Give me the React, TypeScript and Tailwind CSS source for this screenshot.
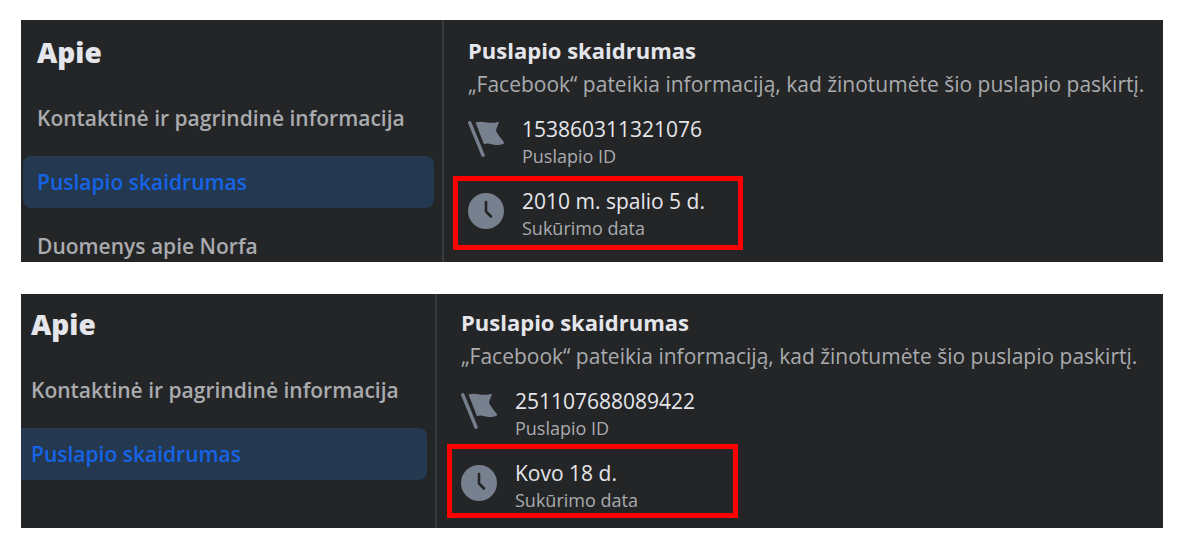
type PanelData = {
  nav: string[];
  id: string;
  created: string;
  inset: boolean;
};

const panels: PanelData[] = [
  {
    nav: ["Kontaktinė ir pagrindinė informacija", "Puslapio skaidrumas", "Duomenys apie Norfa"],
    id: "153860311321076",
    created: "2010 m. spalio 5 d.",
    inset: true,
  },
  {
    nav: ["Kontaktinė ir pagrindinė informacija", "Puslapio skaidrumas"],
    id: "251107688089422",
    created: "Kovo 18 d.",
    inset: false,
  },
];

const ACTIVE = "Puslapio skaidrumas";

function FlagIcon() {
  return (
    <svg viewBox="0 0 36 36" className="mt-[5px] size-9 shrink-0" aria-hidden="true">
      <path d="M1.8 1.800 15 34.200" stroke="#77808f" strokeWidth="3.400" strokeLinecap="round" />
      <path
        d="M7.500 1.600C11 0 15 .8 19 1.400c4 .7 7.500.6 10.500-.5.9-.3 1.500.4 1.100 1.200L28.200 8.500c-.3.9-.2 1.600.3 2.300 2 3.200 4 6.500 7.100 9.900.8.9.4 1.800-.6 2.200-5.400 2-9.500.8-13.800-.2-2.500-.5-4-.1-5.200.6z"
        fill="#77808f"
      />
    </svg>
  );
}

function ClockIcon() {
  return (
    <svg viewBox="0 0 36 36" className="mt-[5px] size-9 shrink-0" aria-hidden="true">
      <circle cx="18" cy="18" r="18" fill="#77808f" />
      <path
        d="M18 9v9.500l5 5"
        fill="none"
        stroke="#242526"
        strokeWidth="2.600"
        strokeLinecap="round"
        strokeLinejoin="round"
      />
    </svg>
  );
}

function Panel({ data }: { data: PanelData }) {
  return (
    <section className="flex overflow-hidden bg-[#242526]">
      <nav
        className={
          data.inset
            ? "w-[423px] shrink-0 border-r-2 border-[#393a3b] pt-3 pr-2 pl-0.5"
            : "w-[416px] shrink-0 border-r-2 border-[#393a3b] pt-2.5 pr-2"
        }
      >
        <h1
          className={
            data.inset
              ? "pl-3.5 text-[28px] leading-10 font-extrabold text-[#e4e6eb]"
              : "pl-2.5 text-[28px] leading-10 font-extrabold text-[#e4e6eb]"
          }
        >
          Apie
        </h1>
        <ul className="mt-5 flex flex-col gap-3">
          {data.nav.map((label) => (
            <li key={label} className="last:-mb-2.5">
              <a
                href="#"
                aria-current={label === ACTIVE ? "page" : undefined}
                className={[
                  "block py-3 text-[21px] leading-7 font-semibold whitespace-nowrap",
                  data.inset ? "rounded-lg pl-3.5" : "rounded-r-lg pl-2.5",
                  label === ACTIVE ? "bg-[#24384f] text-[#1664e6]" : "text-[#a9abaf]",
                ].join(" ")}
              >
                {label}
              </a>
            </li>
          ))}
        </ul>
      </nav>
      <div
        className={
          data.inset ? "min-w-0 flex-1 pt-3 pb-3 pl-6" : "min-w-0 flex-1 pt-2.5 pb-3.5 pl-6"
        }
      >
        <h2 className="text-[22px] leading-9 font-bold text-[#e4e6eb]">Puslapio skaidrumas</h2>
        <p className="text-[21px] leading-8 whitespace-nowrap text-[#a9abaf]">
          „Facebook“ pateikia informaciją, kad žinotumėte šio puslapio paskirtį.
        </p>
        <dl className="mt-4 flex flex-col gap-[18px]">
          <div className="flex gap-[18px]">
            <FlagIcon />
            <div className="flex flex-col-reverse">
              <dt className="text-[18px] leading-7 text-[#a9abaf]">Puslapio ID</dt>
              <dd className="text-[21px] leading-[26px] font-medium text-[#e4e6eb]">{data.id}</dd>
            </div>
          </div>
          <div className="relative flex gap-[18px]">
            <ClockIcon />
            <div className="flex flex-col-reverse">
              <dt className="text-[18px] leading-7 text-[#a9abaf]">Sukūrimo data</dt>
              <dd className="text-[21px] leading-[26px] font-medium text-[#e4e6eb]">{data.created}</dd>
            </div>
            <div
              className={
                data.inset
                  ? "absolute -top-3 -bottom-2 -left-[15px] w-[290px] border-5 border-[#ff0000]"
                  : "absolute -top-4 -bottom-1 -left-3.5 w-[291px] border-5 border-[#ff0000]"
              }
            />
          </div>
        </dl>
      </div>
    </section>
  );
}

export default function App() {
  return (
    <main className="flex min-h-screen flex-col gap-8 bg-white pt-5 pr-[23px] pb-4 pl-[21px] font-['Open_Sans','Noto_Sans',sans-serif]">
      {panels.map((data) => (
        <Panel key={data.id} data={data} />
      ))}
    </main>
  );
}
